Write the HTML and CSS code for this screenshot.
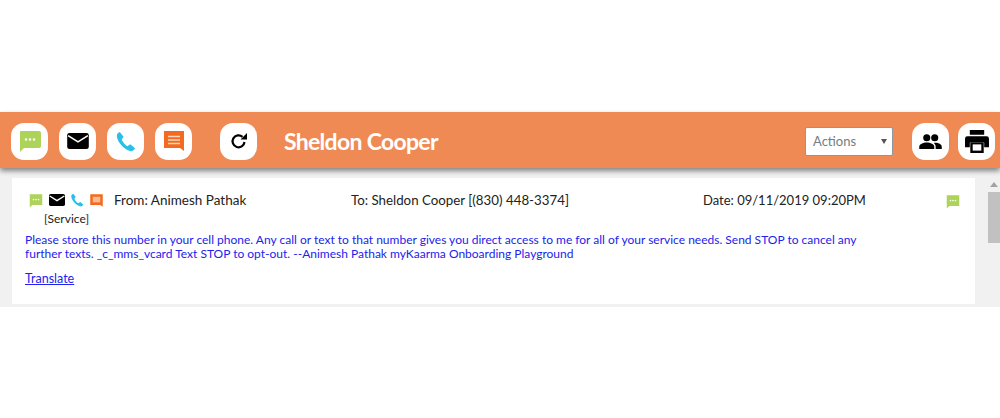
FILE: index.html
```html
<!DOCTYPE html>
<html lang="en">
<head>
  <meta charset="UTF-8" />
  <title>Sheldon Cooper</title>
  <link rel="stylesheet" href="styles.css">
</head>
<body>

  <!-- HEADER -->
  <div class="header">
    <div class="round-btn">
      <svg width="24" height="24" viewBox="0 0 24 24"><path d="M3 2h18a2 2 0 0 1 2 2v13a2 2 0 0 1-2 2H6l-4 4V3a1 1 0 0 1 1-1z" fill="#aed35a"/><circle cx="8" cy="10.500" r="1.200" fill="#fff"/><circle cx="12" cy="10.500" r="1.200" fill="#fff"/><circle cx="16" cy="10.500" r="1.200" fill="#fff"/></svg>
    </div>
    <div class="round-btn">
      <svg width="22" height="18" viewBox="0 0 24 20"><rect y="1" width="24" height="18" rx="2.500" fill="#000"/><path d="M1 4l11 7 11-7" fill="none" stroke="#fff" stroke-width="1.800"/></svg>
    </div>
    <div class="round-btn">
      <svg width="21" height="21" viewBox="0 0 22 22"><path d="M5 1C3 2 1.500 3.500 2 6c1 6 7 13 14 15 2 .5 4-1 5-3l-5-4-3 2c-2-1-5-4-6-7l2-3z" fill="#27c0ea"/></svg>
    </div>
    <div class="round-btn">
      <svg width="22" height="24" viewBox="0 0 22 24"><path d="M1 2h20v20l-4-3H1z" fill="#f26b21"/><path d="M5 7.500h12M5 11h12M5 14.500h12" stroke="#fbd6bd" stroke-width="1.700"/></svg>
    </div>
    <div class="round-btn refresh-btn">
      <svg width="18" height="18" viewBox="0 0 18 18"><path d="M14.500 10a6 6 0 1 1-2-5.200" fill="none" stroke="#000" stroke-width="2.200"/><path d="M10.500 7.500h6.500V1z" fill="#000"/></svg>
    </div>
    <div class="title">Sheldon Cooper</div>
    <div class="actions">
      <span>Actions</span>
      <span class="arrow"></span>
    </div>
    <div class="round-btn">
      <svg width="23" height="15" viewBox="0 0 24 16"><circle cx="8" cy="4" r="3.800" fill="#000"/><circle cx="16.500" cy="4" r="3.800" fill="#000"/><path d="M0 16v-2.500C0 11 4 9 8 9s8 2 8 4.500V16z" fill="#000"/><path d="M17.500 16v-2.500c0-1.700-.8-3-2-4 4-.8 8.500 1.200 8.500 4V16z" fill="#000"/></svg>
    </div>
    <div class="round-btn print-btn">
      <svg width="24" height="23" viewBox="0 0 25 24"><path d="M5 0h15v5H5zM2.500 6.500h20A2.500 2.500 0 0 1 25 9v9h-5v-5H5v5H0V9a2.500 2.500 0 0 1 2.500-2.500z" fill="#000"/><path d="M5.500 13h14v11h-14z" fill="#000"/><path d="M8 15h9v6.500H8z" fill="#fff"/></svg>
    </div>
  </div>

  <!-- MESSAGE LIST -->
  <div class="list">
    <div class="message">
      <div class="msg-top">
        <div class="msg-from">
          <svg width="16" height="15" viewBox="0 0 24 24"><path d="M2 2h20v17H6l-4 4z" fill="#aed35a"/><circle cx="8" cy="10.500" r="1.300" fill="#fff"/><circle cx="12" cy="10.500" r="1.300" fill="#fff"/><circle cx="16" cy="10.500" r="1.300" fill="#fff"/></svg>
          <svg width="16" height="12" viewBox="0 0 24 18"><rect width="24" height="18" rx="2.500" fill="#000"/><path d="M1 3l11 7 11-7" fill="none" stroke="#fff" stroke-width="2"/></svg>
          <svg width="14" height="14" viewBox="0 0 22 22"><path d="M5 1C3 2 1.500 3.500 2 6c1 6 7 13 14 15 2 .5 4-1 5-3l-5-4-3 2c-2-1-5-4-6-7l2-3z" fill="#27c0ea"/></svg>
          <svg width="15" height="15" viewBox="0 0 22 24"><path d="M1 2h20v20l-4-3H1z" fill="#f26b21"/><path d="M5 6h12v9H5z" fill="#fbb98f"/></svg>
          <span class="from-text">From: Animesh Pathak</span>
        </div>
        <div class="msg-to">To: Sheldon Cooper [(830) 448-3374]</div>
        <div class="msg-date">Date: 09/11/2019 09:20PM</div>
        <svg class="msg-type" width="16" height="15" viewBox="0 0 24 24"><path d="M2 2h20v17H6l-4 4z" fill="#aed35a"/><circle cx="8" cy="10.500" r="1.300" fill="#fff"/><circle cx="12" cy="10.500" r="1.300" fill="#fff"/><circle cx="16" cy="10.500" r="1.300" fill="#fff"/></svg>
      </div>
      <div class="service">[Service]</div>
      <p class="msg-body">Please store this number in your cell phone. Any call or text to that number gives you direct access to me for all of your service needs. Send STOP to cancel any further texts. _c_mms_vcard Text STOP to opt-out. --Animesh Pathak myKaarma Onboarding Playground</p>
      <a class="translate" href="#">Translate</a>
    </div>
    <div class="scrollbar">
      <div class="scroll-up"></div>
      <div class="scroll-thumb"></div>
    </div>
  </div>

</body>
</html>
```

FILE: styles.css
```css
* {
  box-sizing: border-box;
  font-family: Lato, 'Open Sans', sans-serif;
}

html, body {
  overflow: hidden;
}

body {
  margin: 0;
  height: 418px;
  background: #fff;
  padding-top: 112px;
}

.header {
  display: flex;
  align-items: center;
  gap: 11px;
  height: 56px;
  padding: 2px 5px 0 11px;
  background-color: #f08a54;
  box-shadow: 0 3px 5px rgba(0, 0, 0, 0.45);
  position: relative;
  z-index: 2;
}

.round-btn {
  display: flex;
  align-items: center;
  justify-content: center;
  flex: none;
  width: 37px;
  height: 37px;
  border-radius: 13px;
  background: #fff;
}

.refresh-btn {
  margin-left: 17px;
}

.print-btn {
  margin-left: -2px;
}

.title {
  flex: 1;
  margin-left: 16px;
  color: #fff;
  font-size: 23px;
  font-weight: 700;
  letter-spacing: -0.7px;
}

.actions {
  display: flex;
  align-items: center;
  justify-content: space-between;
  width: 88px;
  height: 29px;
  margin-right: 8px;
  padding: 0 5px 0 7px;
  background: #fff;
  border: 1px solid #8d97a3;
  border-radius: 2px;
  color: #777c84;
  font-size: 13px;
}

.arrow {
  width: 0;
  height: 0;
  border-left: 3px solid transparent;
  border-right: 3px solid transparent;
  border-top: 5px solid #555;
}

.list {
  display: flex;
  height: 139px;
  padding: 10px 0 0 12px;
  background: #f1f1f1;
}

.message {
  width: 963px;
  height: 126px;
  padding: 14px 13px 0;
  background: #fff;
  color: #222;
}

.msg-top {
  display: flex;
  align-items: center;
  height: 16px;
}

.msg-from {
  display: flex;
  align-items: center;
  gap: 5px;
  width: 326px;
  padding-left: 3px;
}

.from-text {
  margin-left: 5px;
  font-size: 13.500px;
}

.msg-to {
  width: 352px;
  font-size: 13.300px;
}

.msg-date {
  width: 242px;
  font-size: 13px;
}

.msg-type {
  margin-top: 2px;
}

.service {
  margin: 3px 0 0 19px;
  font-size: 12px;
}

.msg-body {
  margin: 7px 0 0;
  color: #2222ee;
  font-size: 12px;
  line-height: 14px;
  width: 860px;
}

.translate {
  display: inline-block;
  margin-top: 10px;
  color: #2222ee;
  font-size: 12.500px;
}

.scrollbar {
  margin-left: 13px;
  width: 12px;
  background: #f1f1f1;
}

.scroll-up {
  width: 0;
  height: 0;
  margin: 4px auto 0;
  border-left: 4px solid transparent;
  border-right: 4px solid transparent;
  border-bottom: 5px solid #a3a3a3;
}

.scroll-thumb {
  height: 51px;
  margin-top: 5px;
  background: #c1c1c1;
}
```
